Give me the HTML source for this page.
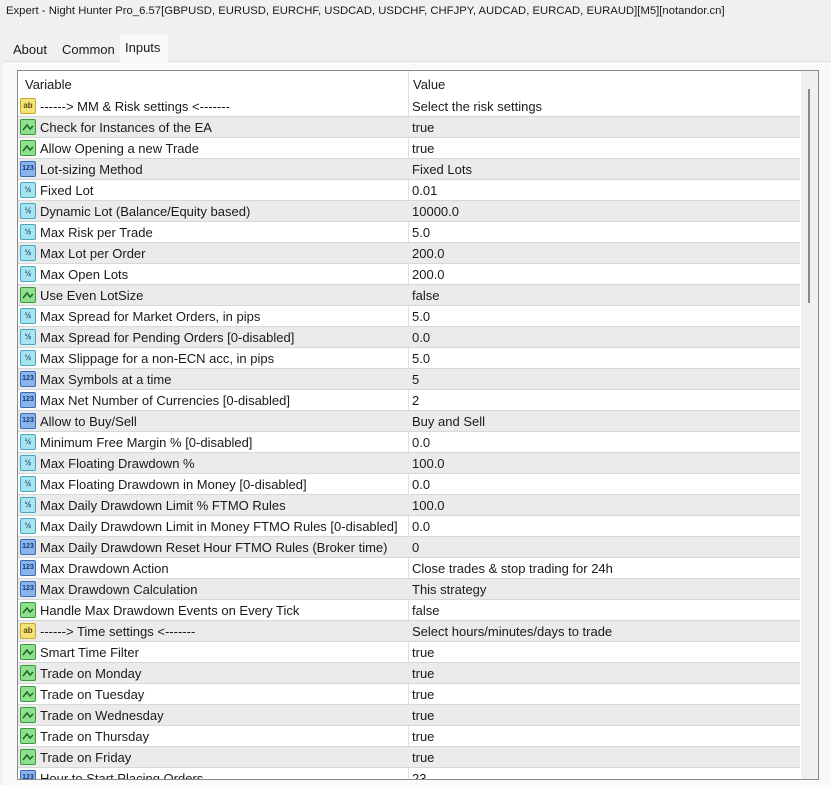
<!DOCTYPE html>
<html><head><meta charset="utf-8"><style>
*{margin:0;padding:0;box-sizing:border-box}
body{width:831px;height:785px;background:#f0f0f0;font-family:"Liberation Sans",sans-serif;font-size:13px;color:#1a1a1a;position:relative;overflow:hidden}
.title{position:absolute;left:6px;top:5px;font-size:11.3px;white-space:nowrap}
.tab{position:absolute;top:37px;height:24px;background:#f0f0f0;padding:5px 0 0 5px;font-size:13px}
.panel{position:absolute;left:3px;top:61px;width:828px;height:724px;background:#f9f9f9;border-top:1px solid #e0e0e0}
.list{position:absolute;left:17px;top:70px;width:802px;height:710px;background:#fff;border:1px solid #8a8a8a;overflow:hidden}
.hdr{position:absolute;left:0;top:0;width:782px;height:25px}
.hdr span{position:absolute;top:6px}
.row{position:absolute;left:0;width:782px;height:21px;border-bottom:1px solid #d8d8d8}
.g{background:#ebebeb}
.row .n{position:absolute;left:22px;top:3px;white-space:nowrap}
.row .v{position:absolute;left:394px;top:3px;white-space:nowrap}
.ic{position:absolute;left:2px;top:2px;width:16px;height:16px;border-radius:2px;font-size:8px;font-weight:bold;text-align:center;line-height:14px}
.ab{background:#f3e27a;border:1px solid #c8a92a;color:#5a4a00}
.b{background:#8ee08e;border:1px solid #3a9a3a}
.i{background:#8cb4ea;border:1px solid #3a6ab8;color:#123a80;font-size:7px}
.d{background:#a8e4f0;border:1px solid #48a8c0;color:#1a5870;font-size:8px}
.col{position:absolute;left:390px;top:0;width:1px;height:710px;background:#e0e0e0}
.sb{position:absolute;left:783px;top:0;width:18px;height:708px;background:#f0f0f0}
.th{position:absolute;left:790px;top:18px;width:2px;height:214px;background:#8a8a8a}
</style></head><body>
<div class="title">Expert - Night Hunter Pro_6.57[GBPUSD, EURUSD, EURCHF, USDCAD, USDCHF, CHFJPY, AUDCAD, EURCAD, EURAUD][M5][notandor.cn]</div>
<div class="tab" style="left:8px;width:47px">About</div>
<div class="tab" style="left:57px;width:61px">Common</div>
<div class="panel"></div>
<div class="tab" style="left:120px;width:48px;top:35px;height:27px;background:#f9f9f9;padding-top:5px">Inputs</div>
<div class="list">
<div class="hdr"><span style="left:7px">Variable</span><span style="left:395px">Value</span></div>
<div class="col"></div>
<div id="rows"></div>
<div class="sb"></div><div class="th"></div>
</div>
<script>
var R=[["ab","------&gt; MM &amp; Risk settings &lt;-------","Select the risk settings"],["b","Check for Instances of the EA","true"],["b","Allow Opening a new Trade","true"],["i","Lot-sizing Method","Fixed Lots"],["d","Fixed Lot","0.01"],["d","Dynamic Lot (Balance/Equity based)","10000.0"],["d","Max Risk per Trade","5.0"],["d","Max Lot per Order","200.0"],["d","Max Open Lots","200.0"],["b","Use Even LotSize","false"],["d","Max Spread for Market Orders, in pips","5.0"],["d","Max Spread for Pending Orders [0-disabled]","0.0"],["d","Max Slippage for a non-ECN acc, in pips","5.0"],["i","Max Symbols at a time","5"],["i","Max Net Number of Currencies [0-disabled]","2"],["i","Allow to Buy/Sell","Buy and Sell"],["d","Minimum Free Margin % [0-disabled]","0.0"],["d","Max Floating Drawdown %","100.0"],["d","Max Floating Drawdown in Money [0-disabled]","0.0"],["d","Max Daily Drawdown Limit % FTMO Rules","100.0"],["d","Max Daily Drawdown Limit in Money FTMO Rules [0-disabled]","0.0"],["i","Max Daily Drawdown Reset Hour FTMO Rules (Broker time)","0"],["i","Max Drawdown Action","Close trades &amp; stop trading for 24h"],["i","Max Drawdown Calculation","This strategy"],["b","Handle Max Drawdown Events on Every Tick","false"],["ab","------&gt; Time settings &lt;-------","Select hours/minutes/days to trade"],["b","Smart Time Filter","true"],["b","Trade on Monday","true"],["b","Trade on Tuesday","true"],["b","Trade on Wednesday","true"],["b","Trade on Thursday","true"],["b","Trade on Friday","true"],["i","Hour to Start Placing Orders","23"]];
var L={ab:"ab",b:"&#x2571;",i:"123",d:"&frac12;"};var h="";
R.forEach(function(r,k){h+='<div class="row'+(k%2?' g':'')+'" style="top:'+(25+k*21)+'px"><div class="ic '+r[0]+'">'+(r[0]=="b"?'<svg width="14" height="14"><path d="M2 10 L6 5 L9 9 L12 6" stroke="#1a6a1a" stroke-width="1.5" fill="none"/></svg>':L[r[0]])+'</div><span class="n">'+r[1]+'</span><span class="v">'+r[2]+'</span></div>';});
document.getElementById("rows").innerHTML=h;
</script>
</body></html>
